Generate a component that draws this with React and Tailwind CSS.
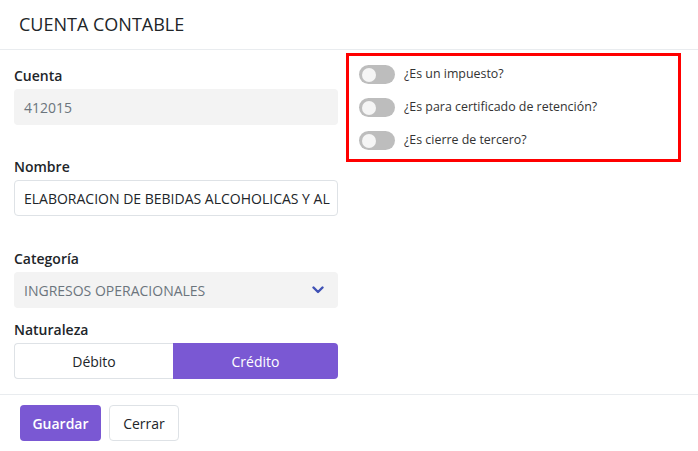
import React from 'react';

const font = { fontFamily: '"Open Sans", "Noto Sans", sans-serif' };

const Toggle = ({ label }) => (
  <div className="flex h-[33px] items-center">
    <span className="relative h-[19px] w-[36px] rounded-full bg-[#bdbdbd]">
      <span className="absolute left-[3px] top-[2.5px] h-[14px] w-[14px] rounded-full bg-[#f5f5f5]" />
    </span>
    <span className="ml-[9px] text-[12.4px] text-[#333]">{label}</span>
  </div>
);

const Label = ({ children }) => (
  <div className="mb-[3px] h-[20px] text-[14px] font-semibold leading-[20px] text-[#212529]">{children}</div>
);

export default function App() {
  return (
    <div className="w-[698px] h-[451px] bg-white" style={font}>
      {/* Header */}
      <div className="flex h-[50px] items-center border-b border-[#e9ecef] px-[19px]">
        <h2 className="text-[18px] text-[#212529]">CUENTA CONTABLE</h2>
      </div>

      {/* Body */}
      <div className="flex gap-[8px] px-[14px]">
        <div className="w-[324px] pt-[16px]">
          <Label>Cuenta</Label>
          <div className="flex h-[36px] items-center rounded-[4px] bg-[#f3f3f3] px-[10px] text-[14px] text-[#6c757d]">
            412015
          </div>

          <div className="mt-[32px]">
            <Label>Nombre</Label>
            <div className="flex h-[36px] items-center overflow-hidden whitespace-nowrap rounded-[4px] border border-[#dee2e6] px-[9px] text-[14px] text-[#212529]">
              ELABORACION DE BEBIDAS ALCOHOLICAS Y AL
            </div>
          </div>

          <div className="mt-[33px]">
            <Label>Categoría</Label>
            <div className="flex h-[36px] items-center justify-between rounded-[4px] bg-[#f3f3f3] pl-[10px] pr-[14px] text-[14px] text-[#6c757d]">
              <span>INGRESOS OPERACIONALES</span>
              <svg width="12" height="8" viewBox="0 0 12 8">
                <path d="M1.5 1.5 L6 6 L10.5 1.5" fill="none" stroke="#3f51b5" strokeWidth="2.4" strokeLinecap="round" strokeLinejoin="round" />
              </svg>
            </div>
          </div>

          <div className="mt-[12px]">
            <Label>Naturaleza</Label>
            <div className="flex h-[36px] text-[14px]">
              <button className="w-[159px] rounded-l-[4px] border border-r-0 border-[#dee2e6] bg-white text-[#212529]">Débito</button>
              <button className="flex-1 rounded-r-[4px] bg-[#7a58d3] text-white">Crédito</button>
            </div>
          </div>
        </div>

        <div className="mt-[3px] w-[335px] self-start">
          <div className="border-[3px] border-[#ff0000] px-[10px] py-[2px]">
            <Toggle label="¿Es un impuesto?" />
            <Toggle label="¿Es para certificado de retención?" />
            <Toggle label="¿Es cierre de tercero?" />
          </div>
        </div>
      </div>

      {/* Footer */}
      <div className="mt-[15px] flex gap-[8px] border-t border-[#e9ecef] px-[20px] pt-[10px]">
        <button className="h-[36px] w-[81px] rounded-[4px] bg-[#7a58d3] text-[14px] font-semibold text-white">Guardar</button>
        <button className="h-[36px] w-[70px] rounded-[4px] border border-[#dee2e6] bg-white text-[14px] text-[#212529]">Cerrar</button>
      </div>
    </div>
  );
}
